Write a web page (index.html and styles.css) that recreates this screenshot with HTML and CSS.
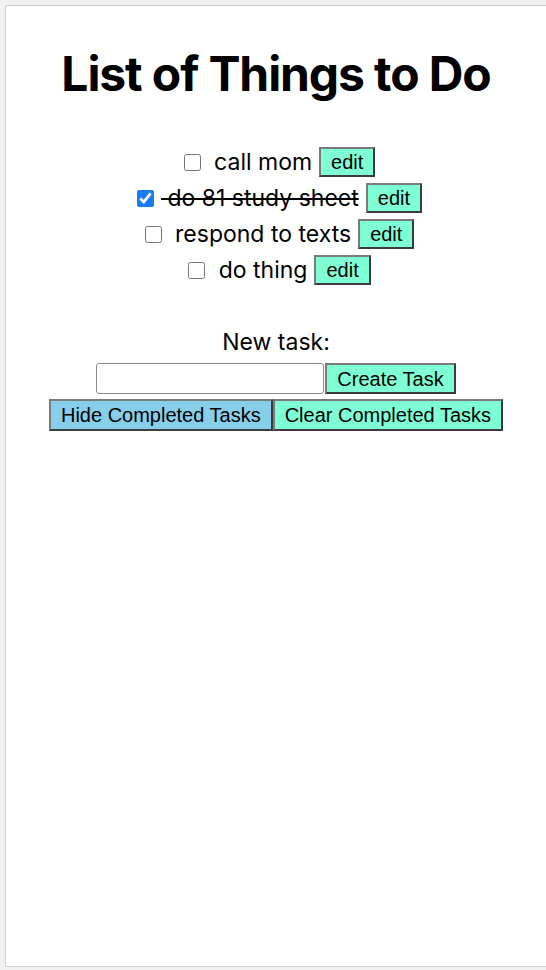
FILE: index.html
```html
<!DOCTYPE html>
<html>
<head>
<meta charset="utf-8">
<link rel="stylesheet" href="styles.css">
</head>
<body>
<div class="frame">
  <main class="page">
    <h1 class="title">List of Things to Do</h1>
    <ul class="tasks">
      <li class="task"><input type="checkbox" class="check"><span class="label"> call mom</span><button class="btn edit">edit</button></li>
      <li class="task"><input type="checkbox" class="check" checked><span class="label done"> do 81 study sheet</span><button class="btn edit">edit</button></li>
      <li class="task"><input type="checkbox" class="check"><span class="label"> respond to texts</span><button class="btn edit">edit</button></li>
      <li class="task"><input type="checkbox" class="check"><span class="label"> do thing</span><button class="btn edit">edit</button></li>
    </ul>
    <div class="new-label">New task:</div>
    <div class="create-row"><input type="text" class="new-input"><button class="btn create">Create Task</button></div>
    <div class="actions"><button class="btn hide">Hide Completed Tasks</button><button class="btn clear">Clear Completed Tasks</button></div>
  </main>
</div>
</body>
</html>
```
FILE: styles.css
```css
html, body {
  margin: 0;
  padding: 0;
  background: #f0f1f0;
}
.frame {
  width: 546px;
  height: 970px;
  padding: 5px 0 3px 5px;
  box-sizing: border-box;
}
.page {
  height: 962px;
  box-sizing: border-box;
  background: #ffffff;
  border: 1px solid #d2d2d2;
  border-right: none;
  font-family: Inter, "Noto Sans", sans-serif;
  color: #000;
  text-align: center;
  overflow: hidden;
}
.title {
  margin: 39px 0 0;
  font-size: 48px;
  font-weight: 700;
  line-height: 58px;
  letter-spacing: -1.1px;
}
.tasks {
  list-style: none;
  margin: 41px 0 0;
  padding: 0 0 0 7px;
}
.task {
  display: flex;
  justify-content: center;
  align-items: center;
  height: 36px;
  font-size: 23px;
}
.check {
  width: 17px;
  height: 17px;
  margin: 0 7px 0 0;
  accent-color: #1a7cf5;
}
.label {
  white-space: pre;
}
.done {
  text-decoration: line-through;
}
.btn {
  font-family: "Liberation Sans", Arial, sans-serif;
  font-size: 20px;
  line-height: 22px;
  color: #000;
  padding: 2px 10px;
  border-width: 2px;
  border-style: solid;
  border-color: #7a7a7a #3c3c3c #3c3c3c #7a7a7a;
  background: #7fffd4;
  border-radius: 0;
}
.edit {
  margin-left: 7px;
  padding: 2px 10px;
}
.new-label {
  margin-top: 41px;
  font-size: 23px;
  line-height: 27px;
}
.create-row {
  margin-top: 7px;
  display: flex;
  justify-content: center;
  align-items: stretch;
  height: 31px;
}
.new-input {
  width: 228px;
  box-sizing: border-box;
  margin: 0 1px 0 0;
  border: 1px solid #8a8a8a;
  border-radius: 3px;
  font-size: 16px;
}
.create {
  padding: 0 10px;
}
.actions {
  margin-top: 5px;
  display: flex;
  justify-content: center;
}
.hide {
  background: #87ceeb;
  padding: 3px 10px;
}
.clear {
  padding: 3px 10px;
}
```
